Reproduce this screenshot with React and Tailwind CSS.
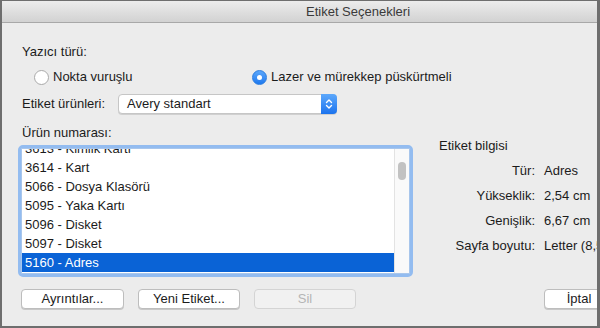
const products = [
  '3613 - Kimlik Kartı',
  '3614 - Kart',
  '5066 - Dosya Klasörü',
  '5095 - Yaka Kartı',
  '5096 - Disket',
  '5097 - Disket',
  '5160 - Adres',
];

const info = [
  ['Tür:', 'Adres'],
  ['Yükseklik:', '2,54 cm'],
  ['Genişlik:', '6,67 cm'],
  ['Sayfa boyutu:', 'Letter (8,5 x 11 inç)'],
];

const Radio = ({ checked, label, className = '' }) => (
  <label className={`flex items-center gap-[4px] ${className}`}>
    {checked ? (
      <span className="w-[15px] h-[15px] rounded-full bg-gradient-to-b from-[#5aa6fa] to-[#1d79ef] border border-[#2b7de0] flex items-center justify-center">
        <span className="w-[5px] h-[5px] rounded-full bg-white" />
      </span>
    ) : (
      <span className="w-[15px] h-[15px] rounded-full bg-white border border-[#a9a9a9]" />
    )}
    <span>{label}</span>
  </label>
);

const Button = ({ children, disabled, className = '' }) => (
  <button
    type="button"
    className={`h-[20px] shrink-0 rounded-[4px] border text-[13px] leading-[18px] ${
      disabled
        ? 'bg-[#f1f1f1] border-[#d4d4d4] text-[#b5b5b5]'
        : 'bg-white border-[#bdbdbd] text-[#1b1b1b] shadow-[0_1px_0_#c8c8c8]'
    } ${className}`}
  >
    {children}
  </button>
);

const App = () => {
  return (
    <div className="w-[600px] h-[328px] flex flex-col overflow-hidden bg-[#ececec] border-t border-l-2 border-r-[3px] border-b-2 border-[#6e6e6e] text-[13px] leading-4 text-[#1b1b1b] font-['Liberation_Sans',Arial,sans-serif]">
      {/* Title bar */}
      <div className="h-[22px] shrink-0 flex items-center pl-[304px] border-b border-[#a8a8a8] bg-gradient-to-b from-[#ececec] to-[#d2d2d2] text-[#3a3a3a]">
        Etiket Seçenekleri
      </div>

      <div className="flex flex-col pl-[20px]">
        <div className="mt-[21px]">Yazıcı türü:</div>

        {/* Printer type */}
        <div className="mt-[9px] flex items-center h-4 pl-[12px]">
          <Radio label="Nokta vuruşlu" className="w-[218px]" />
          <Radio checked label="Lazer ve mürekkep püskürtmeli" />
        </div>

        {/* Label products */}
        <div className="mt-[9px] flex items-center h-[20px]">
          <span className="w-[96px]">Etiket ürünleri:</span>
          <div className="w-[219px] h-[20px] flex rounded-[4px] border border-[#c6c6c6] bg-white shadow-[0_1px_0_#d0d0d0]">
            <span className="flex-1 pl-[8px] leading-[18px]">Avery standart</span>
            <span className="w-[16px] -my-px -mr-px rounded-r-[4px] bg-gradient-to-b from-[#5ca8fb] to-[#1a73ee] flex items-center justify-center">
              <svg width="8" height="12" viewBox="0 0 8 12" fill="none" stroke="white" strokeWidth="1.4" strokeLinecap="round" strokeLinejoin="round">
                <path d="M1.5 4.5 L4 2 L6.5 4.5" />
                <path d="M1.5 7.5 L4 10 L6.5 7.5" />
              </svg>
            </span>
          </div>
        </div>

        {/* Product list + info */}
        <div className="mt-[11px] flex">
          <div className="flex flex-col">
            <div>Ürün numarası:</div>
            <div className="mt-[4px] -ml-[4px] w-[395px] h-[132px] rounded-[5px] border-[3px] border-[#93bcf0]">
              <div className="h-full flex bg-white border border-[#a8c6ec]">
                <div className="flex-1 overflow-hidden">
                  <div className="-mt-[10px]">
                    {products.map((p, i) => (
                      <div
                        key={p}
                        className={`h-[19px] leading-[19px] pl-[3px] ${
                          i === products.length - 1 ? 'bg-[#0a63d6] text-white' : ''
                        }`}
                      >
                        {p}
                      </div>
                    ))}
                  </div>
                </div>
                <div className="w-[15px] bg-[#fafafa] border-l border-[#e3e3e3] pt-[13px] pl-[3px]">
                  <div className="w-[8px] h-[18px] rounded-full bg-[#c2c2c2]" />
                </div>
              </div>
            </div>
          </div>

          <div className="ml-[26px] pt-[13px] flex flex-col">
            <div>Etiket bilgisi</div>
            <div className="mt-[9px] ml-[12px] grid grid-cols-[84px_auto] gap-x-[9px] gap-y-[9px]">
              {info.map(([k, v]) => (
                <div key={k} className="contents">
                  <span className="text-right whitespace-nowrap">{k}</span>
                  <span className="whitespace-nowrap">{v}</span>
                </div>
              ))}
            </div>
          </div>
        </div>

        {/* Buttons */}
        <div className="mt-[12px] -ml-px flex">
          <Button className="w-[103px]">Ayrıntılar...</Button>
          <Button className="ml-[14px] w-[102px]">Yeni Etiket...</Button>
          <Button disabled className="ml-[14px] w-[102px]">Sil</Button>
          <Button className="ml-[188px] w-[70px]">İptal</Button>
        </div>
      </div>
    </div>
  );
};

export default App;
